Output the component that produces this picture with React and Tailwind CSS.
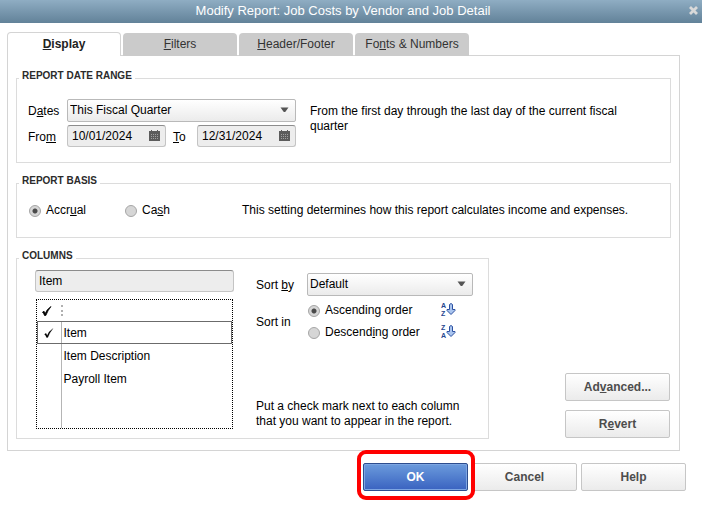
import { useState } from 'react'

const TABS = [
  { key: 'display', label: <><u>D</u>isplay</> },
  { key: 'filters', label: <><u>F</u>ilters</> },
  { key: 'header', label: <><u>H</u>eader/Footer</> },
  { key: 'fonts', label: <>Fo<u>n</u>ts &amp; Numbers</> },
]

const COLUMNS = ['Item', 'Item Description', 'Payroll Item']

function Group({ title, children }) {
  return (
    <fieldset className="border border-[#dcdcdc] px-[2px]">
      <legend className="px-[3px] pt-px pb-[5px] text-[10px] leading-[12px] font-bold text-[#2b2b2b]">
        {title}
      </legend>
      {children}
    </fieldset>
  )
}

function Select({ id, value, options, onChange }) {
  return (
    <div className="relative">
      <select
        id={id}
        value={value}
        onChange={e => onChange(e.target.value)}
        className="block w-full h-[23px] pl-[2px] pr-6 pb-px appearance-none rounded-[2px] border border-[#b9b9b9] bg-linear-to-b from-white to-[#ebebeb] leading-[20px]"
      >
        {options.map(o => <option key={o}>{o}</option>)}
      </select>
      <svg className="absolute right-[7px] top-[8px] pointer-events-none" width="9" height="6" viewBox="0 0 9 6">
        <path d="M0.5 0.5h8L5.2 5H3.8z" fill="#555" />
      </svg>
    </div>
  )
}

function CalendarIcon() {
  return (
    <svg width="11" height="12" viewBox="0 0 11 12">
      <path d="M0 1h2V0h1v1h5V0h1v1h2v10H0z" fill="#5c5c5c" />
      <path d="M2 4.5h8M2 6.5h8M2 8.5h8" stroke="#a0a0a0" strokeDasharray="1 1" />
    </svg>
  )
}

function DateInput({ id, defaultValue }) {
  return (
    <div className="relative">
      <input
        id={id}
        defaultValue={defaultValue}
        className="block w-[99px] h-[22px] pl-[4px] pr-5 rounded-[3px] border border-[#c4c4c4] border-t-[#8c8c8c] bg-[#ededed] leading-[20px]"
      />
      <button aria-label="Pick a date" className="absolute right-[6px] top-[5px]">
        <CalendarIcon />
      </button>
    </div>
  )
}

function Radio({ name, checked, onChange, children }) {
  return (
    <label className="flex items-center gap-[5px]">
      <input
        type="radio"
        name={name}
        checked={checked}
        onChange={onChange}
        className="size-[12px] shrink-0 appearance-none rounded-full border border-[#a6a6a6] bg-[#d6d6d6] checked:bg-[radial-gradient(circle,#4a4a4a_2px,#d6d6d6_3px)]"
      />
      <span>{children}</span>
    </label>
  )
}

function SortIcon({ top, bottom }) {
  return (
    <svg className="self-start" width="15" height="15" viewBox="0 0 15 15" fill="#27468f">
      <text x="0" y="5" fontSize="7" fontWeight="bold">{top}</text>
      <text x="0" y="13" fontSize="7" fontWeight="bold">{bottom}</text>
      <path d="M8.5 1.5Q10 -0.5 11.5 1.5v5H14v1L10 11.5 6 7.5v-1h2.5z" fill="#a9c4ee" stroke="#2c50a0" />
    </svg>
  )
}

function Check({ bold }) {
  return (
    <svg width="10" height="10" viewBox="0 0 10 10" fill="#000" stroke="#000" strokeWidth={bold ? 0.8 : 0.2}>
      <path d="M0.5 6.2L2 5.2 3.2 7.5Q5 3 9 0.5 6 4 3.8 9.5H2.5Q2 7.5 0.5 6.2z" />
    </svg>
  )
}

function Button({ primary, children }) {
  const look = primary
    ? 'border-[#2d4d8e] bg-linear-to-b from-[#6c9bdc] to-[#3a62c0] text-white inset-ring inset-ring-[#7ea6e2]'
    : 'border-[#c6c6c6] bg-linear-to-b from-white to-[#ebebeb] text-[#4d4d4d]'
  return (
    <button className={`block w-[105px] h-[28px] rounded-[2px] border font-bold ${look}`}>
      {children}
    </button>
  )
}

export default function App() {
  const [tab, setTab] = useState('display')
  const [dates, setDates] = useState('This Fiscal Quarter')
  const [basis, setBasis] = useState('accrual')
  const [sortBy, setSortBy] = useState('Default')
  const [order, setOrder] = useState('asc')
  const [picked, setPicked] = useState(['Item'])

  function toggle(name) {
    setPicked(p => (p.includes(name) ? p.filter(n => n !== name) : [...p, name]))
  }

  return (
    <div className="min-h-screen bg-white font-['Liberation_Sans',Arial,sans-serif] text-[12px] leading-[15px] text-black">
      <header className="relative flex h-[23px] items-center justify-center bg-linear-to-b from-[#8fadc3] to-[#628299]">
        <h1 className="pr-4 pb-[2px] text-[13px] text-white">Modify Report: Job Costs by Vendor and Job Detail</h1>
        <button aria-label="Close" className="absolute right-[4px] top-[6px]">
          <svg width="9" height="9" viewBox="0 0 9 9" stroke="#d9d9d9" strokeWidth="2.8">
            <path d="M1 1l7 7M8 1l-7 7" />
          </svg>
        </button>
      </header>

      <div className="ml-[7px] mr-[22px] pt-[9px]">
        <nav role="tablist" className="relative flex items-end gap-[2px] -mb-px">
          {TABS.map(t => (
            <button
              key={t.key}
              role="tab"
              aria-selected={tab === t.key}
              onClick={() => setTab(t.key)}
              className={`w-[114px] rounded-t-[4px] ${
                tab === t.key
                  ? 'h-[24px] border border-b-0 border-[#d4d4d4] bg-white font-bold text-[#222]'
                  : 'h-[23px] bg-[#cbcbcb] text-[#333]'
              }`}
            >
              {t.label}
            </button>
          ))}
        </nav>

        <main className="flex flex-col gap-[11px] border border-[#d4d4d4] px-[8px] pt-[13px] pb-[11px]">
          <Group title="REPORT DATE RANGE">
            <div className="flex gap-[14px] pt-[12px] pb-[15px] pl-[9px]">
              <div className="grid grid-cols-[39px_99px_31px_99px] items-center gap-y-[3px]">
                <label htmlFor="dates" className="pt-[2px]">D<u>a</u>tes</label>
                <div className="col-span-3">
                  <Select
                    id="dates"
                    value={dates}
                    options={['This Fiscal Quarter', 'This Fiscal Year', 'All']}
                    onChange={setDates}
                  />
                </div>
                <label htmlFor="from" className="pt-[2px]">Fro<u>m</u></label>
                <DateInput id="from" defaultValue="10/01/2024" />
                <label htmlFor="to" className="pt-[2px] pl-[7px]"><u>T</u>o</label>
                <DateInput id="to" defaultValue="12/31/2024" />
              </div>
              <p className="flex-1 pt-[5px] pr-[40px]">
                From the first day through the last day of the current fiscal quarter
              </p>
            </div>
          </Group>

          <Group title="REPORT BASIS">
            <div className="flex pt-[11px] pb-[19px] pl-[10px]">
              <div className="w-[96px]">
                <Radio name="basis" checked={basis === 'accrual'} onChange={() => setBasis('accrual')}>
                  Accr<u>u</u>al
                </Radio>
              </div>
              <div className="w-[117px]">
                <Radio name="basis" checked={basis === 'cash'} onChange={() => setBasis('cash')}>
                  Ca<u>s</u>h
                </Radio>
              </div>
              <p className="flex-1">This setting determines how this report calculates income and expenses.</p>
            </div>
          </Group>

          <div className="flex items-end justify-between">
            <Group title="COLUMNS">
              <div className="flex gap-[22px] pt-[3px] pb-[9px] pl-[16px] pr-[13px]">
                <div className="flex w-[199px] flex-col gap-[7px]">
                  <input
                    aria-label="Find column"
                    defaultValue="Item"
                    className="h-[22px] rounded-[3px] border border-[#c4c4c4] border-t-[#8c8c8c] bg-[#ededed] px-[3px]"
                  />
                  <div className="mx-px h-[130px] border border-dotted border-black">
                    <table className="h-full w-full border-collapse text-left">
                      <thead>
                        <tr className="h-[21px]">
                          <th className="w-[24px] p-0 pl-[5px]"><Check bold /></th>
                          <th className="p-0">
                            <div className="h-[11px] border-l-2 border-dotted border-[#b0b0b0]" />
                          </th>
                        </tr>
                      </thead>
                      <tbody>
                        {COLUMNS.map((name, i) => (
                          <tr
                            key={name}
                            className={`h-[23px] ${i === 0 ? 'outline outline-[#6b6b6b] -outline-offset-1' : ''}`}
                          >
                            <td className="border-r border-[#b5b5b5] p-0 pl-[7px]">
                              <label className="relative block size-[10px]">
                                <input
                                  type="checkbox"
                                  aria-label={name}
                                  checked={picked.includes(name)}
                                  onChange={() => toggle(name)}
                                  className="absolute inset-0 appearance-none"
                                />
                                {picked.includes(name) && <Check />}
                              </label>
                            </td>
                            <td className="p-0 pt-px pl-[2px]">{name}</td>
                          </tr>
                        ))}
                        <tr>
                          <td className="border-r border-[#b5b5b5] p-0" />
                          <td className="p-0" />
                        </tr>
                      </tbody>
                    </table>
                  </div>
                </div>

                <div className="flex flex-col justify-between pt-[3px]">
                  <div className="grid grid-cols-[51px_166px] items-center gap-y-[7px]">
                    <label htmlFor="sortby" className="pt-[2px]">Sort <u>b</u>y</label>
                    <Select
                      id="sortby"
                      value={sortBy}
                      options={['Default', 'Date', 'Amount']}
                      onChange={setSortBy}
                    />
                    <span className="pt-[2px]">Sort in</span>
                    <div className="flex flex-col gap-[7px] pl-px">
                      <div className="flex h-[15px] items-center justify-between pr-[17px]">
                        <Radio name="order" checked={order === 'asc'} onChange={() => setOrder('asc')}>
                          Ascendin<u>g</u> order
                        </Radio>
                        <SortIcon top="A" bottom="Z" />
                      </div>
                      <div className="flex h-[15px] items-center justify-between pr-[17px]">
                        <Radio name="order" checked={order === 'desc'} onChange={() => setOrder('desc')}>
                          Descend<u>i</u>ng order
                        </Radio>
                        <SortIcon top="Z" bottom="A" />
                      </div>
                    </div>
                  </div>
                  <p>
                    Put a check mark next to each column<br />
                    that you want to appear in the report.
                  </p>
                </div>
              </div>
            </Group>

            <div className="flex flex-col gap-[9px] pr-px pb-px">
              <Button>Ad<u>v</u>anced...</Button>
              <Button>R<u>e</u>vert</Button>
            </div>
          </div>
        </main>
      </div>

      <footer className="flex justify-end gap-[4px] pt-[12px] pr-[16px]">
        <div className="relative">
          <Button primary>OK</Button>
          <span className="pointer-events-none absolute z-10 -left-[6px] -right-[7px] -top-[13px] -bottom-[9px] rounded-[9px] border-4 border-[#ff0000]" />
        </div>
        <Button>Cancel</Button>
        <Button>Help</Button>
      </footer>
    </div>
  )
}
